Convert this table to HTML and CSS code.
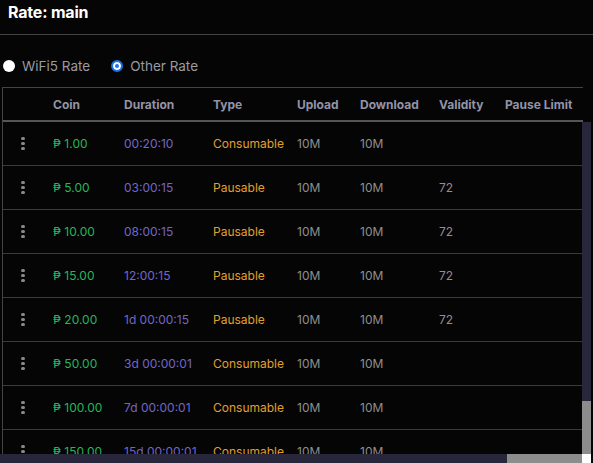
FILE: index.html
```html
<!DOCTYPE html>
<html lang="en">
<head>
  <meta charset="UTF-8">
  <meta name="viewport" content="width=device-width, initial-scale=1.0">
  <title>Rate: main</title>
  <link rel="stylesheet" href="styles.css">
</head>
<body>
  <div id="header">Rate: main</div>

  <div id="rate-type">
    <label class="radio"><input type="radio" name="ratetype" value="wifi5"> WiFi5 Rate</label>
    <label class="radio"><input type="radio" name="ratetype" value="other" checked> Other Rate</label>
  </div>

  <div id="rates">
    <div class="rates-head row">
      <span></span>
      <span>Coin</span>
      <span>Duration</span>
      <span>Type</span>
      <span>Upload</span>
      <span>Download</span>
      <span>Validity</span>
      <span>Pause Limit</span>
    </div>
    <div class="rates-body">
      <div class="rates-view">
        <div class="rates-clip">
          <div class="rates-list">
            <div class="row">
              <span class="menu"><i></i><i></i><i></i></span>
              <span class="coin">₱ 1.00</span>
              <span class="duration">00:20:10</span>
              <span class="type">Consumable</span>
              <span>10M</span>
              <span>10M</span>
              <span></span>
              <span></span>
            </div>
            <div class="row">
              <span class="menu"><i></i><i></i><i></i></span>
              <span class="coin">₱ 5.00</span>
              <span class="duration">03:00:15</span>
              <span class="type">Pausable</span>
              <span>10M</span>
              <span>10M</span>
              <span>72</span>
              <span></span>
            </div>
            <div class="row">
              <span class="menu"><i></i><i></i><i></i></span>
              <span class="coin">₱ 10.00</span>
              <span class="duration">08:00:15</span>
              <span class="type">Pausable</span>
              <span>10M</span>
              <span>10M</span>
              <span>72</span>
              <span></span>
            </div>
            <div class="row">
              <span class="menu"><i></i><i></i><i></i></span>
              <span class="coin">₱ 15.00</span>
              <span class="duration">12:00:15</span>
              <span class="type">Pausable</span>
              <span>10M</span>
              <span>10M</span>
              <span>72</span>
              <span></span>
            </div>
            <div class="row">
              <span class="menu"><i></i><i></i><i></i></span>
              <span class="coin">₱ 20.00</span>
              <span class="duration">1d 00:00:15</span>
              <span class="type">Pausable</span>
              <span>10M</span>
              <span>10M</span>
              <span>72</span>
              <span></span>
            </div>
            <div class="row">
              <span class="menu"><i></i><i></i><i></i></span>
              <span class="coin">₱ 50.00</span>
              <span class="duration">3d 00:00:01</span>
              <span class="type">Consumable</span>
              <span>10M</span>
              <span>10M</span>
              <span></span>
              <span></span>
            </div>
            <div class="row">
              <span class="menu"><i></i><i></i><i></i></span>
              <span class="coin">₱ 100.00</span>
              <span class="duration">7d 00:00:01</span>
              <span class="type">Consumable</span>
              <span>10M</span>
              <span>10M</span>
              <span></span>
              <span></span>
            </div>
            <div class="row">
              <span class="menu"><i></i><i></i><i></i></span>
              <span class="coin">₱ 150.00</span>
              <span class="duration">15d 00:00:01</span>
              <span class="type">Consumable</span>
              <span>10M</span>
              <span>10M</span>
              <span></span>
              <span></span>
            </div>
          </div>
        </div>
        <div class="vbar"><div class="thumb"></div></div>
      </div>
      <div class="hbar-row">
        <div class="hbar"><div class="thumb"></div></div>
        <div class="corner"></div>
      </div>
    </div>
  </div>
</body>
</html>
```

FILE: styles.css
```css
body {
  margin: 0;
  padding: 0;
  font-family: Inter, "Noto Sans", Arial, sans-serif;
  background-color: #050505;
  color: #8f8f8f;
  overflow: hidden;
}

#header {
  color: #fff;
  font-size: 16px;
  font-weight: 700;
  letter-spacing: -0.2px;
  padding: 3px 8px 0;
  height: 31px;
  line-height: 18px;
  border-bottom: 1px solid #444;
}

#rate-type {
  display: flex;
  gap: 21px;
  padding: 22px 0 0 3px;
  height: 30px;
  font-size: 13.5px;
  color: #9a9aa2;
}

.radio {
  display: flex;
  align-items: center;
  gap: 7px;
  height: 18px;
}

.radio input {
  appearance: none;
  margin: 0;
  width: 12px;
  height: 12px;
  border-radius: 50%;
  background-color: #fff;
}

.radio input:checked {
  background-color: #1a73e8;
  border: 2px solid #1a73e8;
  box-shadow: inset 0 0 0 2px #fff;
}

#rates {
  width: 591px;
}

.row {
  display: grid;
  grid-template-columns: 50px 71px 89px 84px 63px 79px 66px 165px;
  align-items: center;
  font-size: 12px;
}

.rates-head {
  margin-left: 2px;
  width: 580px;
  height: 32px;
  border-top: 1px solid #444;
  border-left: 1px solid #444;
  border-bottom: 2px solid #555;
  color: #9393a8;
  font-weight: 700;
  overflow: hidden;
}

.rates-body {
  display: flex;
  flex-direction: column;
  height: 342px;
}

.rates-view {
  display: flex;
  height: 332px;
}

.rates-clip {
  flex: 1;
  overflow: hidden;
}

.vbar {
  width: 9px;
  background-color: #8c8c8c;
}

.vbar .thumb {
  height: 279px;
  background-color: #28263a;
}

.hbar-row {
  display: flex;
  height: 10px;
}

.hbar {
  flex: 1;
  background-color: #8c8c8c;
}

.hbar .thumb {
  width: 507px;
  height: 100%;
  background-color: #28263a;
}

.corner {
  width: 9px;
  background-color: #fff;
}

.rates-list {
  margin-left: 2px;
  width: 667px;
  border-left: 1px solid #444;
}

.rates-list .row {
  height: 43px;
  border-bottom: 1px solid #3a3a3a;
}

.menu {
  display: flex;
  flex-direction: column;
  align-items: center;
  gap: 1.5px;
  width: 40px;
}

.menu i {
  display: block;
  width: 3.5px;
  height: 3.5px;
  border-radius: 50%;
  background-color: #8a8a8a;
}

.coin {
  color: #22b85a;
}

.duration {
  color: #7366c9;
}

.type {
  color: #e0a02a;
}
```
